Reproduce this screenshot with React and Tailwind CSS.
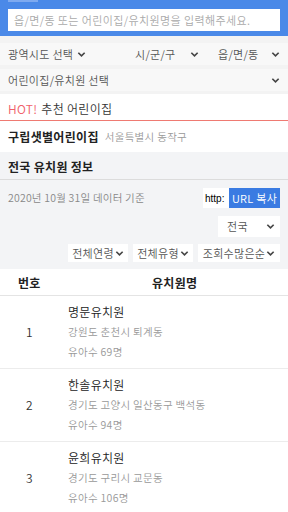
import React from "react";

// ── small parts ─────────────────────────────────────────────
function Chevron(props) {
  return (
    <svg viewBox="0 0 10 10" className={"h-[9px] w-[9px] " + (props.className || "")}>
      <path d="M1.5 3l3.5 3.5L8.5 3" fill="none" stroke="#444" strokeWidth="1.8" />
    </svg>
  );
}

var rows = [
  { no: 1, name: "명문유치원", addr: "강원도 춘천시 퇴계동", kids: "유아수 69명" },
  { no: 2, name: "한솔유치원", addr: "경기도 고양시 일산동구 백석동", kids: "유아수 94명" },
  { no: 3, name: "윤희유치원", addr: "경기도 구리시 교문동", kids: "유아수 106명" },
];

export default function App() {
  return (
    <div className="h-[512px] w-[288px] overflow-hidden bg-white font-[350] tracking-[0.3px] text-[#333]"
      style={{ fontFamily: '"Noto Sans CJK KR", "Noto Sans", sans-serif' }}>
      {/* search bar */}
      <header className="relative bg-[#4a89e8] px-2 pb-[5px] pt-[9px]">
        <div className="absolute left-2 top-0 h-[2px] w-[30px] bg-[#7eaaf0]" />
        <div className="flex h-[22px] items-center bg-white px-[6px] text-[11px] tracking-[0.4px] text-[#aaa]">
          읍/면/동 또는 어린이집/유치원명을 입력해주세요.
        </div>
      </header>

      {/* region selects */}
      <div className="bg-[#f3f3f3] pt-[7px]">
        <div className="flex h-[22px] items-center bg-[#f8f8f8] px-2 text-[11px] text-[#555]">
          <span className="flex w-[127px] items-center gap-[4px]">광역시도 선택 <Chevron /></span>
          <span className="flex w-[70px] items-center justify-between pr-[6px]">시/군/구 <Chevron /></span>
          <span className="ml-[13px] flex flex-1 items-center justify-between">읍/면/동 <Chevron /></span>
        </div>
        <div className="mt-[4px] flex h-[22px] items-center justify-between bg-[#f8f8f8] px-2 text-[11px] text-[#555]">
          <span>어린이집/유치원 선택</span>
          <Chevron />
        </div>
        <div className="h-[3px]" />
      </div>

      {/* recommended */}
      <div className="flex h-[27px] items-center border-b-[1.5px] border-[#ef7a72] bg-white px-2 pt-[3px] text-[12px]">
        <span className="text-[#f0606a]">HOT!</span>
        <span className="ml-1 text-[#333]">추천 어린이집</span>
      </div>
      <div className="flex h-[31px] items-center bg-white px-2">
        <span className="text-[12px] font-bold text-[#222]">구립샛별어린이집</span>
        <span className="ml-[6px] text-[10.5px] text-[#999]">서울특별시 동작구</span>
      </div>

      {/* kindergarten info */}
      <div className="flex h-[28px] items-center border-b border-[#dcdcdc] bg-[#f3f4f6] px-2 pt-[3px] text-[12px] font-bold text-[#222]">
        전국 유치원 정보
      </div>
      <div className="bg-[#f3f4f6] px-2 pb-[7px] pt-[8px]">
        <div className="flex items-center justify-between">
          <span className="text-[10.5px] tracking-[0.2px] text-[#888]">2020년 10월 31일 데이터 기준</span>
          <div className="flex h-[20px] items-stretch">
            <span className="flex w-[26px] items-center overflow-hidden bg-white pl-[2px] text-[10px] tracking-normal text-black" style={{ fontFamily: '"Liberation Sans", sans-serif' }}>http:</span>
            <span className="flex w-[51px] items-center justify-center bg-[#3a7be2] text-[11px] text-white">URL 복사</span>
          </div>
        </div>
        <div className="mt-[8px] flex justify-end">
          <div className="flex h-[21px] w-[62px] items-center justify-between bg-white pl-[9px] pr-[5px] text-[11px] text-[#555]">
            전국 <Chevron />
          </div>
        </div>
        <div className="mt-[7px] flex justify-end gap-[5px] text-[11px] text-[#555]">
          <span className="flex h-[18px] w-[60px] items-center justify-center gap-[1px] bg-white">전체연령<Chevron /></span>
          <span className="flex h-[18px] w-[60px] items-center justify-center gap-[1px] bg-white">전체유형<Chevron /></span>
          <span className="flex h-[18px] w-[82px] items-center justify-center gap-[1px] bg-white">조회수많은순<Chevron /></span>
        </div>
      </div>

      {/* table */}
      <div className="flex h-[27px] items-center border-b border-[#e4e4e4] bg-white pt-[2px] text-[12px] font-bold text-[#222]">
        <span className="w-[60px] pl-[18px]">번호</span>
        <span className="ml-[92px]">유치원명</span>
      </div>
      {rows.map(function (r) {
        return (
          <div key={r.no} className="flex h-[73px] border-b border-[#ececec] bg-white pt-[6px]">
            <span className="w-[68px] pl-[26px] pt-[20px] text-[12px] leading-[20px] text-[#333]">{r.no}</span>
            <div className="flex flex-col leading-[20px]">
              <span className="text-[12px] text-[#222]">{r.name}</span>
              <span className="text-[10.5px] text-[#999]">{r.addr}</span>
              <span className="text-[10.5px] text-[#999]">{r.kids}</span>
            </div>
          </div>
        );
      })}
    </div>
  );
}
